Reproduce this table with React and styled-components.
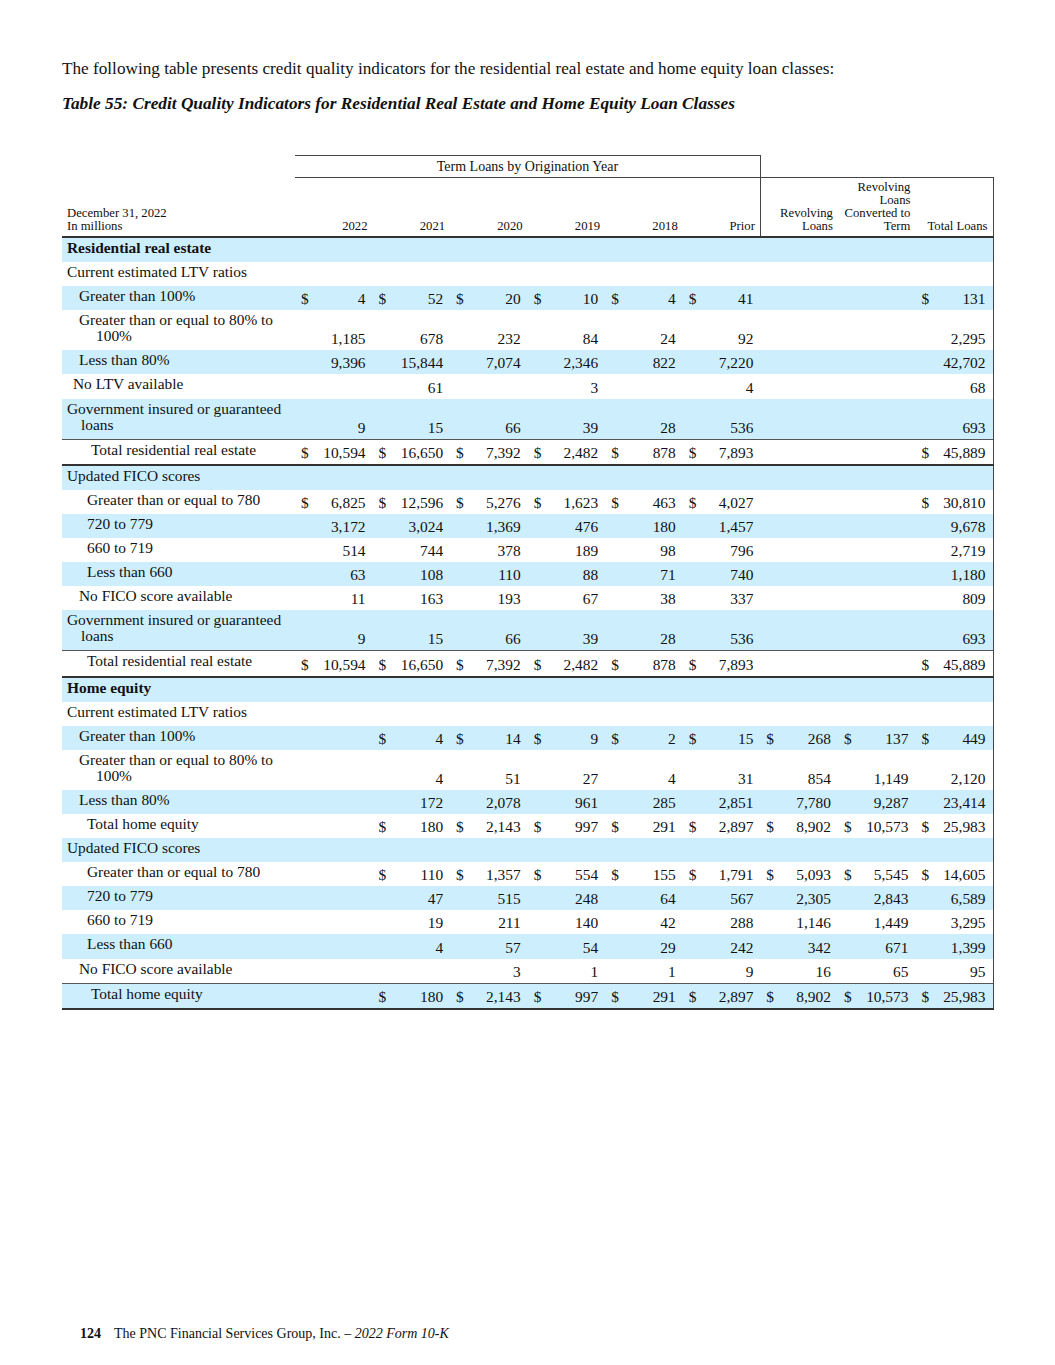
import React from "react";
import styled, { createGlobalStyle } from "styled-components";

const Global = createGlobalStyle`
  html, body { margin: 0; padding: 0; background: #fff; }
  body { font-family: "Liberation Serif", "Times New Roman", serif; color: #111; }
`;

const Page = styled.div`
  width: 1055px;
  min-height: 1365px;
  box-sizing: border-box;
  padding: 58px 62px 0 62px;
  display: flex;
  flex-direction: column;
`;

const Intro = styled.p`
  margin: 0;
  font-size: 17.2px;
  line-height: 21px;
`;

const Title = styled.h2`
  margin: 14px 0 0 0;
  font-size: 17.3px;
  line-height: 21px;
  font-weight: bold;
  font-style: italic;
`;

const Table = styled.table`
  margin-top: 41px;
  width: 931px;
  border-collapse: collapse;
  table-layout: fixed;
  font-size: 15.4px;
`;

const HeadCell = styled.th`
  font-weight: normal;
  font-size: ${(p) => (p.$big ? "14px" : "12.7px")};
  line-height: 13px;
  vertical-align: ${(p) => (p.$top ? "middle" : "bottom")};
  text-align: ${(p) => (p.$left ? "left" : p.$center ? "center" : "right")};
  padding: ${(p) => (p.$top ? "0 5px" : "0 5px 3px 5px")};
  border-top: ${(p) => (p.$lineTop ? "1px solid #444" : "none")};
  border-bottom: ${(p) => (p.$lineBottom ? "1px solid #444" : p.$thickBottom ? "2px solid #333" : "none")};
  border-right: ${(p) => (p.$lineRight ? "1px solid #444" : "none")};
  height: ${(p) => (p.$top ? "21px" : "55px")};
  white-space: nowrap;
`;

const Row = styled.tr`
  background: ${(p) => (p.$shaded ? "#cdeefc" : "#fff")};
  border-top: ${(p) => (p.$lineTop ? "1px solid #555" : "none")};
  border-bottom: ${(p) => (p.$bottom === "thick" ? "2px solid #333" : "none")};
`;

const LabelCell = styled.td`
  vertical-align: top;
  line-height: 16px;
  white-space: nowrap;
  padding: 2px 0 6.1px ${(p) => p.$pad}px;
  text-indent: ${(p) => p.$hang}px;
  font-weight: ${(p) => (p.$bold ? "bold" : "normal")};
`;

const ValueCell = styled.td`
  vertical-align: bottom;
  line-height: 16px;
  padding: 0 7px 3px 6px;
  border-right: ${(p) => (p.$edge ? "1px solid #444" : "none")};
`;

const Amount = styled.div`
  display: flex;
  justify-content: space-between;
  white-space: nowrap;
`;

const Footer = styled.div`
  margin-top: auto;
  margin-bottom: 23px;
  padding-left: 18px;
  font-size: 14px;
  line-height: 16px;
  display: flex;
  gap: 13px;
`;

const PageNum = styled.span`
  font-weight: bold;
`;

const Em = styled.span`
  font-style: italic;
`;

const E = ["", "", "", "", "", "", "", "", ""];

const rows = [
  { label: ["Residential real estate"], bold: true, first: 67 },
  { label: ["Current estimated LTV ratios"], first: 67 },
  { label: ["Greater than 100%"], first: 79, v: ["$4", "$52", "$20", "$10", "$4", "$41", "", "", "$131"] },
  { label: ["Greater than or equal to 80% to", "100%"], first: 79, cont: 96, v: ["1,185", "678", "232", "84", "24", "92", "", "", "2,295"] },
  { label: ["Less than 80%"], first: 79, v: ["9,396", "15,844", "7,074", "2,346", "822", "7,220", "", "", "42,702"] },
  { label: ["No LTV available"], first: 73, v: ["", "61", "", "3", "", "4", "", "", "68"] },
  { label: ["Government insured or guaranteed", "loans"], first: 67, cont: 81, v: ["9", "15", "66", "39", "28", "536", "", "", "693"] },
  { label: ["Total residential real estate"], first: 91, lineTop: true, bottom: "thick", v: ["$10,594", "$16,650", "$7,392", "$2,482", "$878", "$7,893", "", "", "$45,889"] },
  { label: ["Updated FICO scores"], first: 67 },
  { label: ["Greater than or equal to 780"], first: 87, v: ["$6,825", "$12,596", "$5,276", "$1,623", "$463", "$4,027", "", "", "$30,810"] },
  { label: ["720 to 779"], first: 87, v: ["3,172", "3,024", "1,369", "476", "180", "1,457", "", "", "9,678"] },
  { label: ["660 to 719"], first: 87, v: ["514", "744", "378", "189", "98", "796", "", "", "2,719"] },
  { label: ["Less than 660"], first: 87, v: ["63", "108", "110", "88", "71", "740", "", "", "1,180"] },
  { label: ["No FICO score available"], first: 79, v: ["11", "163", "193", "67", "38", "337", "", "", "809"] },
  { label: ["Government insured or guaranteed", "loans"], first: 67, cont: 81, v: ["9", "15", "66", "39", "28", "536", "", "", "693"] },
  { label: ["Total residential real estate"], first: 87, lineTop: true, bottom: "thick", v: ["$10,594", "$16,650", "$7,392", "$2,482", "$878", "$7,893", "", "", "$45,889"] },
  { label: ["Home equity"], bold: true, first: 67 },
  { label: ["Current estimated LTV ratios"], first: 67 },
  { label: ["Greater than 100%"], first: 79, v: ["", "$4", "$14", "$9", "$2", "$15", "$268", "$137", "$449"] },
  { label: ["Greater than or equal to 80% to", "100%"], first: 79, cont: 96, v: ["", "4", "51", "27", "4", "31", "854", "1,149", "2,120"] },
  { label: ["Less than 80%"], first: 79, v: ["", "172", "2,078", "961", "285", "2,851", "7,780", "9,287", "23,414"] },
  { label: ["Total home equity"], first: 87, v: ["", "$180", "$2,143", "$997", "$291", "$2,897", "$8,902", "$10,573", "$25,983"] },
  { label: ["Updated FICO scores"], first: 67 },
  { label: ["Greater than or equal to 780"], first: 87, v: ["", "$110", "$1,357", "$554", "$155", "$1,791", "$5,093", "$5,545", "$14,605"] },
  { label: ["720 to 779"], first: 87, v: ["", "47", "515", "248", "64", "567", "2,305", "2,843", "6,589"] },
  { label: ["660 to 719"], first: 87, v: ["", "19", "211", "140", "42", "288", "1,146", "1,449", "3,295"] },
  { label: ["Less than 660"], first: 87, v: ["", "4", "57", "54", "29", "242", "342", "671", "1,399"] },
  { label: ["No FICO score available"], first: 79, v: ["", "", "3", "1", "1", "9", "16", "65", "95"] },
  { label: ["Total home equity"], first: 91, lineTop: true, bottom: "thick", v: ["", "$180", "$2,143", "$997", "$291", "$2,897", "$8,902", "$10,573", "$25,983"] },
];

const colWidth = 698 / 9;

function Value({ text, edge }) {
  const dollar = text.startsWith("$");
  const num = dollar ? text.slice(1) : text;
  return (
    <ValueCell $edge={edge}>
      <Amount>
        <span>{dollar ? "$" : ""}</span>
        <span>{num}</span>
      </Amount>
    </ValueCell>
  );
}

export default function App() {
  return (
    <Page>
      <Global />
      <Intro>
        The following table presents credit quality indicators for the residential real estate and home equity loan classes:
      </Intro>
      <Title>Table 55: Credit Quality Indicators for Residential Real Estate and Home Equity Loan Classes</Title>
      <Table>
        <colgroup>
          <col style={{ width: 233 }} />
          {E.map((_, i) => (
            <col key={i} style={{ width: colWidth }} />
          ))}
        </colgroup>
        <thead>
          <tr>
            <HeadCell $top />
            <HeadCell $top $big $center colSpan={6} $lineTop $lineBottom $lineRight>
              Term Loans by Origination Year
            </HeadCell>
            <HeadCell $top colSpan={3} $lineBottom />
          </tr>
          <tr>
            <HeadCell $left $thickBottom>
              December 31, 2022
              <br />
              In millions
            </HeadCell>
            <HeadCell $thickBottom>2022</HeadCell>
            <HeadCell $thickBottom>2021</HeadCell>
            <HeadCell $thickBottom>2020</HeadCell>
            <HeadCell $thickBottom>2019</HeadCell>
            <HeadCell $thickBottom>2018</HeadCell>
            <HeadCell $thickBottom $lineRight>Prior</HeadCell>
            <HeadCell $thickBottom>
              Revolving
              <br />
              Loans
            </HeadCell>
            <HeadCell $thickBottom>
              Revolving
              <br />
              Loans
              <br />
              Converted to
              <br />
              Term
            </HeadCell>
            <HeadCell $thickBottom $lineRight>Total Loans</HeadCell>
          </tr>
        </thead>
        <tbody>
          {rows.map((r, i) => {
            const cont = r.cont ?? r.first;
            const vals = r.v || E;
            return (
              <Row key={i} $shaded={i % 2 === 0} $lineTop={r.lineTop} $bottom={r.bottom}>
                <LabelCell $pad={cont - 62} $hang={r.first - cont} $bold={r.bold}>
                  {r.label.map((line, k) => (
                    <React.Fragment key={k}>
                      {k > 0 && <br />}
                      {line}
                    </React.Fragment>
                  ))}
                </LabelCell>
                {vals.map((t, j) => (
                  <Value key={j} text={t} edge={j === 8} />
                ))}
              </Row>
            );
          })}
        </tbody>
      </Table>
      <Footer>
        <PageNum>124</PageNum>
        <span>
          The PNC Financial Services Group, Inc. – <Em>2022 Form 10-K</Em>
        </span>
      </Footer>
    </Page>
  );
}
